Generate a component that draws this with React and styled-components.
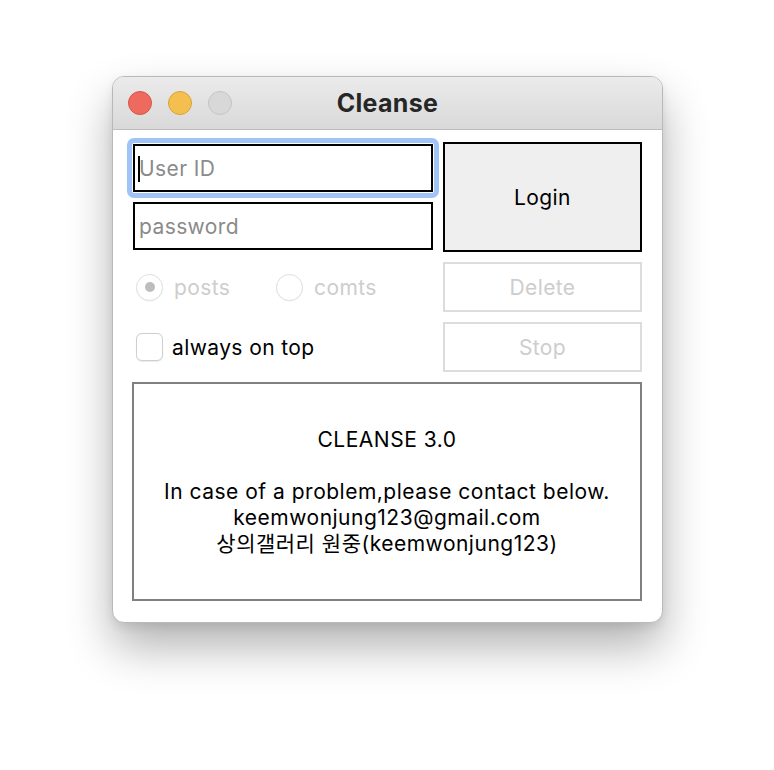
import React from "react";
import styled, { createGlobalStyle } from "styled-components";

const Global = createGlobalStyle`
  html, body { margin: 0; padding: 0; background: #ffffff; }
  body { font-family: Inter, "Noto Sans CJK KR", sans-serif; }
  * { box-sizing: border-box; }
`;

const Page = styled.div`
  width: 774px;
  height: 770px;
  padding: 76px 0 0 112px;
  background: #ffffff;
`;

const Window = styled.div`
  width: 551px;
  height: 547px;
  border-radius: 12px;
  border: 1px solid #b9b9b9;
  background: #ffffff;
  overflow: hidden;
  box-shadow: 0 24px 46px rgba(0, 0, 0, 0.3), 0 4px 10px rgba(0, 0, 0, 0.08);
  display: flex;
  flex-direction: column;
`;

const TitleBar = styled.div`
  height: 53px;
  flex: none;
  position: relative;
  display: flex;
  align-items: center;
  justify-content: center;
  background: linear-gradient(#ebebeb, #d9d9d9);
  border-bottom: 1px solid #bdbdbd;
`;

const Lights = styled.div`
  position: absolute;
  left: 15px;
  top: 14px;
  display: flex;
  gap: 16px;
`;

const Light = styled.span`
  width: 24px;
  height: 24px;
  border-radius: 50%;
  background: ${(p) => p.$bg};
  border: 1px solid ${(p) => p.$bd};
`;

const Title = styled.div`
  font-family: Inter, sans-serif;
  font-weight: 700;
  font-size: 25px;
  color: #262626;
  letter-spacing: 0.3px;
`;

const Content = styled.div`
  flex: 1;
  padding: 12px 20px 20px 20px;
  display: grid;
  grid-template-columns: 300px 199px;
  grid-template-rows: 110px 50px 50px 219px;
  column-gap: 10px;
  row-gap: 10px;
`;

const InputStack = styled.div`
  display: flex;
  flex-direction: column;
  gap: 10px;
  padding-top: 2px;
`;

const FieldWrap = styled.div`
  position: relative;
  height: 48px;
  ${(p) =>
    p.$focused &&
    `
    &::before {
      content: "";
      position: absolute;
      inset: -6px;
      border: 5px solid #a1c4f8;
      border-radius: 7px;
      pointer-events: none;
    }
    &::after {
      content: "";
      position: absolute;
      left: 5px;
      top: 12px;
      width: 2px;
      height: 26px;
      background: #000;
    }
  `}
`;

const Input = styled.input`
  width: 100%;
  height: 100%;
  border: 2px solid #000;
  border-radius: 0;
  outline: none;
  padding: 0 0 0 4px;
  font-family: Inter, sans-serif;
  font-size: 21px;
  letter-spacing: 0.4px;
  color: #000;
  background: #fff;
  &::placeholder { color: #8a8a8a; }
`;

const Button = styled.div`
  display: flex;
  align-items: center;
  justify-content: center;
  font-family: Inter, sans-serif;
  font-size: 21px;
  letter-spacing: 0.4px;
  color: ${(p) => (p.$disabled ? "#cdcdcd" : "#000")};
  background: ${(p) => (p.$disabled ? "#fff" : "#efefef")};
  border: 2px solid ${(p) => (p.$disabled ? "#dcdcdc" : "#000")};
`;

const RadioRow = styled.div`
  display: flex;
  align-items: center;
  padding-left: 3px;
`;

const RadioItem = styled.div`
  width: 140px;
  display: flex;
  align-items: center;
  gap: 11px;
`;

const RadioCircle = styled.span`
  width: 27px;
  height: 27px;
  border-radius: 50%;
  border: 1px solid #e0e0e0;
  background: #fff;
  box-shadow: 0 0.5px 1px rgba(0, 0, 0, 0.06);
  display: flex;
  align-items: center;
  justify-content: center;
  &::after {
    content: "";
    width: 10px;
    height: 10px;
    border-radius: 50%;
    background: ${(p) => (p.$checked ? "#bdbdbd" : "transparent")};
  }
`;

const Label = styled.span`
  font-family: Inter, sans-serif;
  font-size: 21px;
  letter-spacing: 0.4px;
  color: ${(p) => (p.$disabled ? "#cdcdcd" : "#000")};
`;

const CheckRow = styled.div`
  display: flex;
  align-items: center;
  gap: 9px;
  padding-left: 3px;
`;

const CheckBox = styled.span`
  width: 27px;
  height: 28px;
  border-radius: 6px;
  border: 1px solid #cfcfcf;
  background: #fff;
  box-shadow: 0 0.5px 1px rgba(0, 0, 0, 0.08);
`;

const InfoBox = styled.div`
  grid-column: 1 / span 2;
  margin-left: -1px;
  border: 2px solid #808080;
  display: flex;
  flex-direction: column;
  align-items: center;
  justify-content: center;
  font-family: Inter, "Noto Sans CJK KR", sans-serif;
  font-size: 21px;
  letter-spacing: 0.5px;
  line-height: 26px;
  color: #000;
  text-align: center;
`;

const Line = styled.div`
  height: 26px;
  white-space: nowrap;
`;

export default function App() {
  return (
    <Page>
      <Global />
      <Window>
        <TitleBar>
          <Lights>
            <Light $bg="#ee6a5f" $bd="#d65447" />
            <Light $bg="#f5bf4f" $bd="#d9a23f" />
            <Light $bg="#d8d8d8" $bd="#c4c4c4" />
          </Lights>
          <Title>Cleanse</Title>
        </TitleBar>
        <Content>
          <InputStack>
            <FieldWrap $focused>
              <Input placeholder="User ID" readOnly />
            </FieldWrap>
            <FieldWrap>
              <Input placeholder="password" readOnly />
            </FieldWrap>
          </InputStack>
          <Button>Login</Button>
          <RadioRow>
            <RadioItem>
              <RadioCircle $checked />
              <Label $disabled>posts</Label>
            </RadioItem>
            <RadioItem>
              <RadioCircle />
              <Label $disabled>comts</Label>
            </RadioItem>
          </RadioRow>
          <Button $disabled>Delete</Button>
          <CheckRow>
            <CheckBox />
            <Label>always on top</Label>
          </CheckRow>
          <Button $disabled>Stop</Button>
          <InfoBox>
            <Line>CLEANSE 3.0</Line>
            <Line />
            <Line>In case of a problem,please contact below.</Line>
            <Line>keemwonjung123@gmail.com</Line>
            <Line>상의갤러리 원중(keemwonjung123)</Line>
          </InfoBox>
        </Content>
      </Window>
    </Page>
  );
}
